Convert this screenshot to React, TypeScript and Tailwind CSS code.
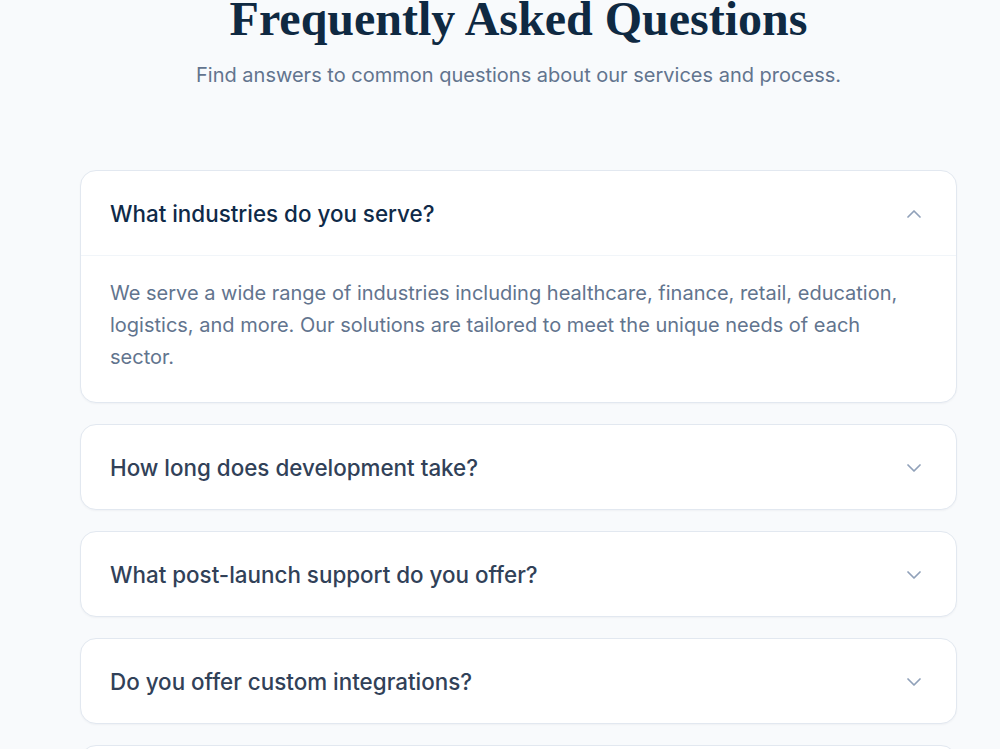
import { ChevronDown, ChevronUp } from "lucide-react";

const faqs = [
  {
    q: "What industries do you serve?",
    a: "We serve a wide range of industries including healthcare, finance, retail, education, logistics, and more. Our solutions are tailored to meet the unique needs of each sector.",
  },
  { q: "How long does development take?", a: "" },
  { q: "What post-launch support do you offer?", a: "" },
  { q: "Do you offer custom integrations?", a: "" },
  { q: "How do you price your projects?", a: "" },
];

function FaqItem({ q, a, open }: { q: string; a: string; open: boolean }) {
  return (
    <div className="rounded-2xl border border-slate-200 bg-white shadow-[0_1px_2px_rgba(15,23,42,0.04)] overflow-hidden">
      <button className="w-full flex items-center justify-between pl-[29px] pr-[30px] pt-[29px] pb-[27px] text-left">
        <span
          className={
            "text-[22.4px] leading-7 font-medium " +
            (open ? "text-[#0f2a48]" : "text-slate-700")
          }
        >
          {q}
        </span>
        {open ? (
          <ChevronUp size={24} strokeWidth={1.75} className="text-slate-400" />
        ) : (
          <ChevronDown size={24} strokeWidth={1.75} className="text-slate-400" />
        )}
      </button>
      {open && (
        <div className="border-t border-slate-100 pl-[29px] pr-[40px] pt-[21px] pb-[29px]">
          <p className="text-xl leading-8 text-slate-500">{a}</p>
        </div>
      )}
    </div>
  );
}

export default function App() {
  return (
    <div
      className="min-h-screen bg-slate-50 overflow-hidden"
      style={{ fontFamily: "Inter, 'Noto Sans', sans-serif" }}
    >
      <div className="pl-[80px] pr-[43px]">
        <div className="text-center">
          <h1
            className="-mt-[5px] text-[48px] leading-[48px] font-bold text-[#0f2942]"
            style={{ fontFamily: "'Liberation Serif', 'DejaVu Serif', serif" }}
          >
            Frequently Asked Questions
          </h1>
          <p className="mt-[18px] text-xl leading-7 text-slate-500">
            Find answers to common questions about our services and process.
          </p>
        </div>

        <div className="mt-[81px] flex flex-col gap-[21px] pb-10">
          {faqs.map((f, i) => (
            <FaqItem key={f.q} q={f.q} a={f.a} open={i === 0} />
          ))}
        </div>
      </div>
    </div>
  );
}
